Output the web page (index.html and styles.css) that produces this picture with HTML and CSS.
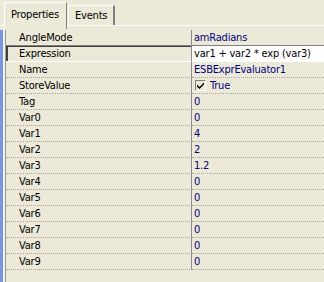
FILE: index.html
```html
<!DOCTYPE html>
<html>
<head>
<meta charset="utf-8">
<link rel="stylesheet" href="styles.css">
</head>
<body>
<div class="inspector">
  <div class="tabs">
    <div class="tab active">Properties</div>
    <div class="tab">Events</div>
  </div>
  <div class="pane">
    <div class="edge">
      <div class="grid">
        <div class="row above-sel"><div class="name">AngleMode</div><div class="value">amRadians</div></div>
        <div class="row sel"><div class="name">Expression</div><div class="value">var1 + var2 * exp (var3)</div></div>
        <div class="row"><div class="name">Name</div><div class="value">ESBExprEvaluator1</div></div>
        <div class="row"><div class="name">StoreValue</div><div class="value"><span class="check"><svg width="9" height="9" viewBox="0 0 9 9"><path d="M1 3.5 L3.5 6 L8 1.5 L8 3.5 L3.5 8 L1 5.5 Z" fill="#000"/></svg></span>True</div></div>
        <div class="row"><div class="name">Tag</div><div class="value">0</div></div>
        <div class="row"><div class="name">Var0</div><div class="value">0</div></div>
        <div class="row"><div class="name">Var1</div><div class="value">4</div></div>
        <div class="row"><div class="name">Var2</div><div class="value">2</div></div>
        <div class="row"><div class="name">Var3</div><div class="value">1.2</div></div>
        <div class="row"><div class="name">Var4</div><div class="value">0</div></div>
        <div class="row"><div class="name">Var5</div><div class="value">0</div></div>
        <div class="row"><div class="name">Var6</div><div class="value">0</div></div>
        <div class="row"><div class="name">Var7</div><div class="value">0</div></div>
        <div class="row"><div class="name">Var8</div><div class="value">0</div></div>
        <div class="row"><div class="name">Var9</div><div class="value">0</div></div>
      </div>
    </div>
  </div>
</div>
</body>
</html>
```
FILE: styles.css
```css
html, body {
  margin: 0;
  padding: 0;
  background: #ECE9D8;
  width: 324px;
  height: 282px;
  overflow: hidden;
}
body {
  font-family: "DejaVu Sans Condensed", "DejaVu Sans", sans-serif;
  font-stretch: condensed;
  font-size: 11px;
  letter-spacing: -0.2px;
  color: #000;
}
.inspector {
  display: flex;
  flex-direction: column;
  height: 282px;
}
.tabs {
  display: flex;
  align-items: flex-end;
  height: 25px;
  padding-left: 4px;
  position: relative;
  z-index: 1;
}
.tab {
  box-sizing: border-box;
  height: 20px;
  padding: 0 6px 0 6px;
  line-height: 20px;
  border-top: 1px solid #fff;
  border-left: 1px solid #fff;
  border-right: 2px solid #808080;
  background: #ECE9D8;
  margin-left: 1px;
}
.tab.active {
  height: 27px;
  margin-bottom: -4px;
  margin-left: 0;
  padding: 0 7px 4px 6px;
  line-height: 24px;
  border-right: 1px solid #808080;
}
.pane {
  flex: 1;
  border-top: 1px solid #fff;
  padding-top: 4px;
  display: flex;
  flex-direction: column;
}
.edge {
  flex: 1;
  border-left: 3px solid #7b95de;
  padding-left: 2px;
  background: #f3f2ec;
  display: flex;
}
.grid {
  flex: 1;
  border-left: 1px solid #9a9a9a;
  background: #ECE9D8;
}
.row {
  display: flex;
  height: 16px;
}
.name {
  box-sizing: border-box;
  width: 186px;
  padding-left: 13px;
  line-height: 16px;
  border-right: 1px solid #8c8c8c;
  border-bottom: 1px dotted #a8a8a8;
}
.value {
  flex: 1;
  box-sizing: border-box;
  padding-left: 2px;
  line-height: 16px;
  color: #000080;
  border-bottom: 1px dotted #a8a8a8;
  white-space: nowrap;
  display: flex;
  align-items: center;
}
.above-sel .name,
.above-sel .value {
  border-bottom: 1px solid #808080;
}
.sel .name {
  border-bottom: 1px solid #fff;
  box-shadow: inset 2px 1px 0 #404040;
}
.sel .value {
  background: #fff;
  color: #000;
  border-bottom: 1px solid #fff;
}
.check {
  box-sizing: border-box;
  width: 11px;
  height: 11px;
  border-top: 1px solid #808080;
  border-left: 1px solid #808080;
  border-right: 1px solid #fff;
  border-bottom: 1px solid #fff;
  background: #ECE9D8;
  display: flex;
  align-items: center;
  justify-content: center;
  margin-right: 4px;
  margin-left: 1px;
}
.check svg {
  display: block;
}
```
